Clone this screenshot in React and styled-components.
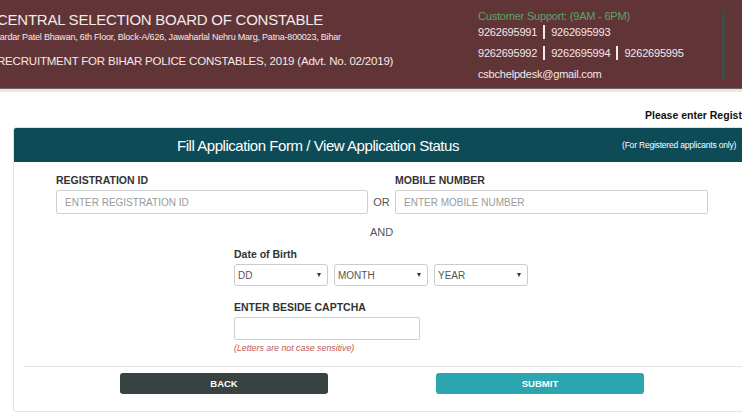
import styled, { createGlobalStyle } from "styled-components";

const GlobalStyle = createGlobalStyle`
  body {
    margin: 0;
    background: #ffffff;
    font-family: "Liberation Sans", Arial, sans-serif;
    overflow: hidden;
  }
`;

const phonesA = ["9262695991", "9262695993"];
const phonesB = ["9262695992", "9262695994", "9262695995"];

export default function App() {
  return (
    <>
      <GlobalStyle />
      <TopBar>
        <Brand>
          <BoardName>CENTRAL SELECTION BOARD OF CONSTABLE</BoardName>
          <Address>
            Sardar Patel Bhawan, 6th Floor, Block-A/626, Jawaharlal Nehru Marg,
            Patna-800023, Bihar
          </Address>
          <Recruitment>
            RECRUITMENT FOR BIHAR POLICE CONSTABLES, 2019 (Advt. No. 02/2019)
          </Recruitment>
        </Brand>
        <Support>
          <SupportTitle>Customer Support: (9AM - 6PM)</SupportTitle>
          <PhoneRow>
            {phonesA.map((p) => (
              <Phone key={p}>{p}</Phone>
            ))}
          </PhoneRow>
          <PhoneRow>
            {phonesB.map((p) => (
              <Phone key={p}>{p}</Phone>
            ))}
          </PhoneRow>
          <Email>csbchelpdesk@gmail.com</Email>
        </Support>
      </TopBar>
      <Strip />
      <Notice>Please enter Registration ID or Mobile Number</Notice>

      <Card>
        <PanelHead>
          <PanelTitle>Fill Application Form / View Application Status</PanelTitle>
          <PanelNote>(For Registered applicants only)</PanelNote>
        </PanelHead>
        <PanelBody>
          <IdGrid>
            <Label>REGISTRATION ID</Label>
            <span />
            <Label>MOBILE NUMBER</Label>
            <TextInput placeholder="ENTER REGISTRATION ID" />
            <Joiner>OR</Joiner>
            <TextInput placeholder="ENTER MOBILE NUMBER" />
            <span />
            <Joiner $top={11}>AND</Joiner>
          </IdGrid>

          <DobBlock>
            <Label>Date of Birth</Label>
            <SelectRow>
              <FakeSelect>
                DD
                <Caret />
              </FakeSelect>
              <FakeSelect>
                MONTH
                <Caret />
              </FakeSelect>
              <FakeSelect>
                YEAR
                <Caret />
              </FakeSelect>
            </SelectRow>
            <Label $top={14}>ENTER BESIDE CAPTCHA</Label>
            <CaptchaInput />
            <Hint>(Letters are not case sensitive)</Hint>
          </DobBlock>

          <Rule />
          <ButtonRow>
            <Button $bg="#384242">BACK</Button>
            <Button $bg="#2ba6b0">SUBMIT</Button>
          </ButtonRow>
        </PanelBody>
      </Card>
    </>
  );
}

const TopBar = styled.header`
  display: flex;
  height: 88px;
  background: #613538;
  border-bottom: 1px solid #6f6462;
  color: #f3e9e9;
`;

const Brand = styled.div`
  width: 481px;
  margin-left: -3px;
  padding-top: 11px;
  display: flex;
  flex-direction: column;
`;

const BoardName = styled.div`
  font-size: 15px;
  letter-spacing: -0.25px;
  line-height: 18px;
`;

const Address = styled.div`
  margin-left: -3px;
  margin-top: 3px;
  font-size: 9px;
  letter-spacing: -0.2px;
  line-height: 10px;
`;

const Recruitment = styled.div`
  margin-top: 11px;
  font-size: 11.5px;
  letter-spacing: -0.2px;
  line-height: 16px;
`;

const Support = styled.div`
  width: 247px;
  margin-top: 10px;
  height: 70px;
  border-right: 3px solid #414b45;
  box-sizing: border-box;
  font-size: 11px;
  letter-spacing: -0.2px;
`;

const SupportTitle = styled.div`
  color: #5aa464;
  line-height: 13px;
`;

const PhoneRow = styled.div`
  display: flex;
  margin: 2px 0 7px;
  line-height: 14px;
`;

const Phone = styled.span`
  padding: 0 6px;
  & + & {
    border-left: 2px solid #f3e9e9;
  }
  &:first-child {
    padding-left: 0;
  }
`;

const Email = styled.div`
  margin-top: 1px;
  line-height: 14px;
`;

const Strip = styled.div`
  height: 3px;
  background: #efe7df;
`;

const Notice = styled.div`
  margin: 16px 0 0 645px;
  white-space: nowrap;
  font-size: 10.5px;
  font-weight: bold;
  line-height: 14px;
  color: #111;
`;

const Card = styled.section`
  margin: 5px 0 0 13px;
  width: 745px;
  border: 1px solid #e3e3e3;
  border-radius: 3px;
  overflow: hidden;
`;

const PanelHead = styled.div`
  display: flex;
  align-items: center;
  height: 34px;
  background: #0d4b57;
  color: #ffffff;
`;

const PanelTitle = styled.div`
  width: 608px;
  text-align: center;
  font-size: 15px;
  letter-spacing: -0.45px;
`;

const PanelNote = styled.div`
  font-size: 8.5px;
  letter-spacing: -0.2px;
  white-space: nowrap;
`;

const PanelBody = styled.div`
  padding: 11px 0 17px;
`;

const IdGrid = styled.div`
  display: grid;
  grid-template-columns: 312px 27px 313px;
  margin-left: 42px;
`;

const Label = styled.div`
  font-size: 10.5px;
  font-weight: bold;
  color: #333;
  line-height: 14px;
  margin: ${(p) => p.$top || 0}px 0 3px;
`;

const TextInput = styled.input`
  box-sizing: border-box;
  height: 24px;
  border: 1px solid #cfcfcf;
  border-radius: 2px;
  padding: 0 8px;
  font-family: inherit;
  font-size: 10px;
  outline: none;
  &::placeholder {
    color: #9a9a9a;
  }
`;

const Joiner = styled.div`
  align-self: center;
  text-align: center;
  font-size: 11px;
  color: #555;
  line-height: 14px;
  margin-top: ${(p) => p.$top || 0}px;
`;

const DobBlock = styled.div`
  margin: 8px 0 0 220px;
  display: flex;
  flex-direction: column;
  align-items: flex-start;
`;

const SelectRow = styled.div`
  display: flex;
  gap: 6px;
`;

const FakeSelect = styled.div`
  box-sizing: border-box;
  width: 94px;
  height: 22px;
  border: 1px solid #cccccc;
  border-radius: 3px;
  padding: 0 6px 0 3px;
  display: flex;
  align-items: center;
  justify-content: space-between;
  font-size: 10px;
  color: #555;
`;

const Caret = styled.span`
  width: 0;
  height: 0;
  border-left: 2.5px solid transparent;
  border-right: 2.5px solid transparent;
  border-top: 4px solid #333;
`;

const CaptchaInput = styled(TextInput)`
  width: 186px;
  height: 23px;
`;

const Hint = styled.div`
  margin-top: 3px;
  font-size: 8.8px;
  font-style: italic;
  color: #c0554e;
  line-height: 11px;
`;

const Rule = styled.hr`
  margin: 12px 0 0 10px;
  border: 0;
  border-top: 1px solid #e6e6e6;
`;

const ButtonRow = styled.div`
  display: flex;
  gap: 108px;
  margin: 6px 0 0 106px;
`;

const Button = styled.button`
  width: 208px;
  height: 21px;
  border: 0;
  border-radius: 3px;
  background: ${(p) => p.$bg};
  color: #ffffff;
  font-family: inherit;
  font-size: 9.5px;
  font-weight: bold;
`;
